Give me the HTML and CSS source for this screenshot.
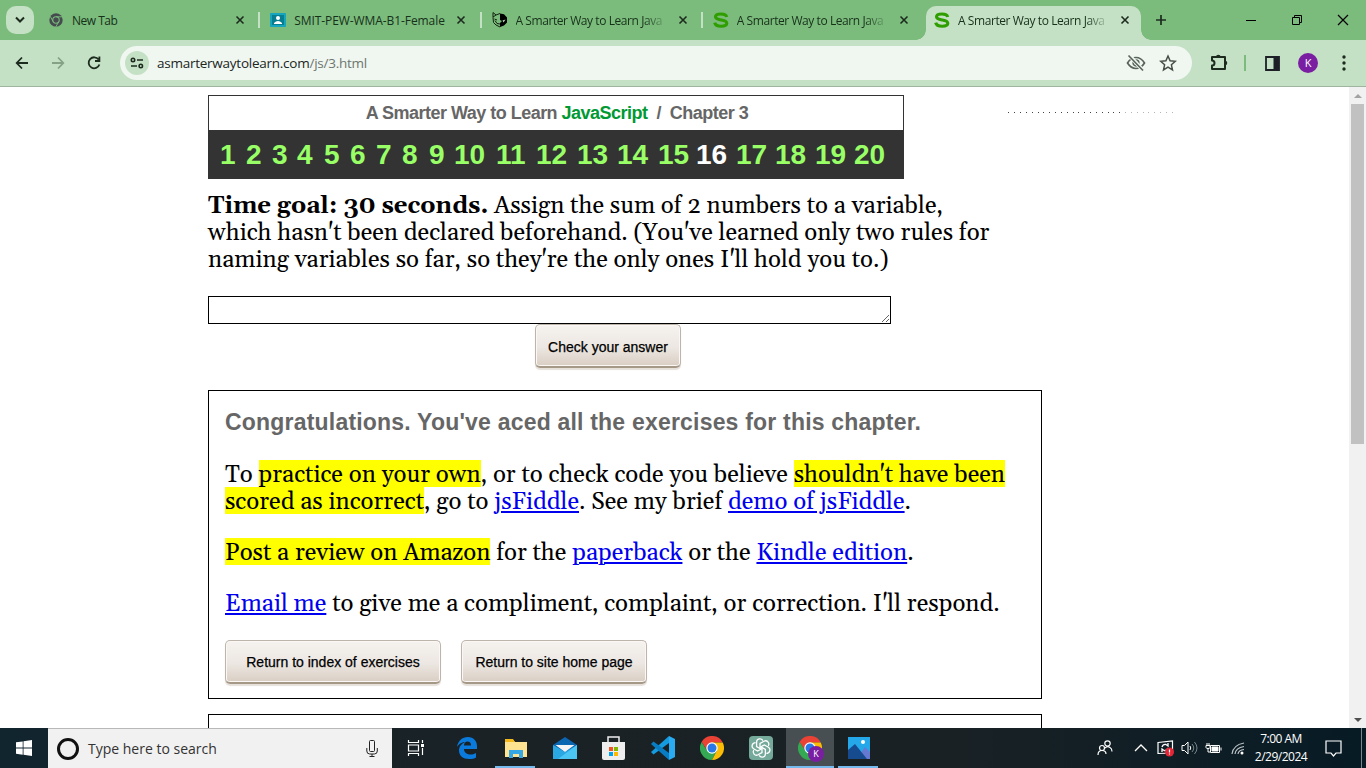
FILE: index.html
```
<!DOCTYPE html>
<html lang="en">
<head>
<meta charset="utf-8">
<title>A Smarter Way to Learn JavaScript</title>
<link rel="stylesheet" href="styles.css">
</head>
<body>
<svg class="defs" width="0" height="0">
  <symbol id="x" viewBox="0 0 10 10"><path d="M1.500 1.500l7 7M8.500 1.500l-7 7" stroke="#1d2b1f" stroke-width="1.600"/></symbol>
  <symbol id="s" viewBox="0 0 16 16"><path d="M13.700 5C13.200 2.700 10.800 2 8 2C4.500 2 2.500 3.100 2.500 4.800C2.500 7.200 5.500 7.400 8 7.900C11 8.500 13.800 8.900 13.800 11.300C13.800 13.300 11 14.200 8.200 14.200C4.800 14.200 2.200 13 1.700 10.600" fill="none" stroke="#2f9e00" stroke-width="3.100"/></symbol>
  <symbol id="chrome" viewBox="0 0 24 24"><path d="M12 6.500h10.700A12 12 0 0 0 1.600 6l5.600 8.500z" fill="#ea4335"/><path d="M7.200 14.700L1.600 6A12 12 0 0 0 12 24l4.900-9.300z" fill="#34a853"/><path d="M16.800 14.700L12 24A12 12 0 0 0 22.700 6.500H12z" fill="#fbbc05"/><circle cx="12" cy="12" r="5.700" fill="#fff"/><circle cx="12" cy="12" r="4.500" fill="#2878e8"/></symbol>
</svg>
<header class="tabs">
  <div class="tabsearch"><svg width="10" height="8" viewBox="0 0 10 8"><path d="M1 1.500l4 4 4-4" fill="none" stroke="#1d2b1f" stroke-width="2"/></svg></div>
  <div class="tab"><svg class="fav small" viewBox="0 0 24 24"><circle cx="12" cy="12" r="11.500" fill="#454b4f"/><circle cx="12" cy="12" r="5.500" fill="none" stroke="#7bbc7c" stroke-width="1.800"/><path d="M12 6.500h11M7.200 14.700L2 5.500M16.800 14.700L11.500 24" stroke="#7bbc7c" stroke-width="1.600"/></svg><span class="title t1">New Tab</span><svg class="close"><use href="#x"/></svg></div>
  <div class="tab"><svg class="fav" viewBox="0 0 16 16"><rect y="1" width="16" height="14" rx="1" fill="#16a5bd"/><rect x="2" y="3" width="12" height="10" fill="#087e91"/><circle cx="8" cy="6" r="2" fill="#fff"/><path d="M4 12V11q4-4 8 0v1z" fill="#fff"/></svg><span class="title t2">SMIT-PEW-WMA-B1-Female</span><svg class="close"><use href="#x"/></svg></div>
  <div class="tab"><svg class="fav" viewBox="0 0 16 16"><path d="M8 1.500l4 .7 3 3.300v5l-3 3-4 1.500V11l2-2-2-1z" fill="#000"/><path d="M8 1.500L4 3 1 .5v5l.5 5L4 13l4 2M1 5l3-2M3 8.500l2 3 3 .5M2.500 7L5 8" fill="none" stroke="#10210f"/><path d="M10.500 8.500l3-1-2 3z" fill="#b7dab7"/></svg><span class="title fade">A Smarter Way to Learn Java</span><svg class="close"><use href="#x"/></svg></div>
  <div class="tab last"><svg class="fav"><use href="#s"/></svg><span class="title fade">A Smarter Way to Learn Java</span><svg class="close"><use href="#x"/></svg></div>
  <div class="tab active"><svg class="fav"><use href="#s"/></svg><span class="title fade">A Smarter Way to Learn Java</span><svg class="close"><use href="#x"/></svg></div>
  <svg class="plus" width="12" height="12" viewBox="0 0 12 12"><path d="M6 1v10M1 6h10" stroke="#1d2b1f" stroke-width="1.700"/></svg>
  <div class="win">
    <svg width="12" height="12"><path d="M1 6.500h10" stroke="#000"/></svg>
    <svg width="12" height="12" fill="none" stroke="#000"><path d="M1.500 3.500h7v7h-7zM3.500 3.500v-2h7v7h-2"/></svg>
    <svg width="12" height="12"><path d="M1 1l10 10M11 1L1 11" stroke="#000" stroke-width="1.200"/></svg>
  </div>
</header>
<div class="toolbar">
  <div class="navs">
    <svg width="16" height="16" viewBox="0 0 16 16" fill="none" stroke="#1d2b1f" stroke-width="1.800"><path d="M14 8H3M8 2.500L2.700 8 8 13.500"/></svg>
    <svg width="16" height="16" viewBox="0 0 16 16" fill="none" stroke="#85a286" stroke-width="1.800"><path d="M2 8h11M8 2.500L13.300 8 8 13.500"/></svg>
    <svg width="16" height="16" viewBox="0 0 16 16" fill="none" stroke="#1d2b1f" stroke-width="1.800"><path d="M12.600 4.500A5.500 5.500 0 1 0 13.400 9.500M13.400 1.500V6H9"/></svg>
  </div>
  <div class="omni">
    <div class="site"><svg width="14" height="12" viewBox="0 0 14 12" fill="none" stroke="#1d2b1f" stroke-width="1.600"><circle cx="3" cy="3" r="1.700"/><path d="M7 3h6M1 9h6"/><circle cx="10.800" cy="9" r="1.700"/></svg></div>
    <span class="url">asmarterwaytolearn.com<i>/js/3.html</i></span>
    <svg width="20" height="18" viewBox="0 0 20 18" fill="none" stroke="#59635a" stroke-width="1.700"><path d="M1.500 9Q5 3.500 10 3.500T18.500 9Q15 14.500 10 14.500T1.500 9z"/><circle cx="10" cy="9" r="2.800"/><path d="M3 1l14 15.500" stroke="#f0f7f1" stroke-width="4"/><path d="M2.500 1.500l14.500 15"/></svg>
    <svg class="star" width="18" height="18" viewBox="0 0 18 18"><path d="M9 2l2.100 4.800 5.200.5-3.900 3.500 1.100 5.100L9 13.200l-4.500 2.700 1.100-5.100L1.700 7.300l5.200-.5z" fill="none" stroke="#454f46" stroke-width="1.500"/></svg>
  </div>
  <svg class="puzzle" width="20" height="20" viewBox="0 0 20 20"><path d="M3 4h13v12H3v-3.500q2.500 0 2.500-2.500T3 7.500z" fill="none" stroke="#1d2b1f" stroke-width="2" stroke-linejoin="round"/><path d="M7 4a2.300 2.300 0 0 1 4.600 0zM16 7.700a2.300 2.300 0 0 1 0 4.600z" fill="#1d2b1f"/></svg>
  <i class="bar"></i>
  <svg class="panel" width="15" height="15"><path d="M1 1h13v13H1z" fill="none" stroke="#1d2026" stroke-width="1.800"/><path d="M8.500 1H14v13H8.500z" fill="#1d2026"/></svg>
  <div class="avatar">K</div>
  <svg class="dots" width="4" height="16" fill="#1d2b1f"><circle cx="2" cy="2" r="1.700"/><circle cx="2" cy="8" r="1.700"/><circle cx="2" cy="14" r="1.700"/></svg>
</div>
<div class="view">
  <main class="page">
    <div class="top">
      <div class="head">
        <div class="name">A Smarter Way to Learn <b>JavaScript</b>&nbsp; /&nbsp; Chapter 3</div>
        <nav class="nums"><a>1</a><a>2</a><a>3</a><a>4</a><a>5</a><a>6</a><a>7</a><a>8</a><a>9</a><a>10</a><a>11</a><a>12</a><a>13</a><a>14</a><a>15</a><a class="on">16</a><a>17</a><a>18</a><a>19</a><a>20</a></nav>
      </div>
      <div class="dotline"></div>
    </div>
    <p class="serif question"><b>Time goal: 30 seconds.</b> Assign the sum of 2 numbers to a variable,<br>which hasn't been declared beforehand. (You've learned only two rules for<br>naming variables so far, so they're the only ones I'll hold you to.)</p>
    <textarea class="answer"></textarea>
    <button class="btn check">Check your answer</button>
    <section class="box">
      <h1>Congratulations. You've aced all the exercises for this chapter.</h1>
      <p class="serif">To <mark>practice on your own</mark>, or to check code you believe <mark>shouldn't have been</mark><br><mark>scored as incorrect</mark>, go to <a>jsFiddle</a>. See my brief <a>demo of jsFiddle</a>.</p>
      <p class="serif"><mark>Post a review on Amazon</mark> for the <a>paperback</a> or the <a>Kindle edition</a>.</p>
      <p class="serif"><a>Email me</a> to give me a compliment, complaint, or correction. I'll respond.</p>
      <div class="buttons"><button class="btn index">Return to index of exercises</button><button class="btn home">Return to site home page</button></div>
    </section>
    <section class="box next"></section>
  </main>
  <div class="scroll"><i class="up"></i><div class="thumb"></div><i class="down"></i></div>
</div>
<footer class="task">
  <div class="start"><svg width="16" height="16" fill="#fff"><path d="M0 2.300L6.700 1.400V7.500H0zM7.500 1.200L16 0v7.500H7.500zM0 8.500h6.700v6.200L0 13.700zM7.500 8.500H16V16l-8.500-1.200z"/></svg></div>
  <div class="search"><i class="ring"></i><span>Type here to search</span><svg width="12" height="18" viewBox="0 0 12 18" fill="none" stroke="#222"><rect x="3.500" y=".5" width="5" height="11" rx="1"/><path d="M.8 8v3q0 3 3 3h4.500q3 0 3-3V8M6 14v2.500M3.500 16.500h5"/></svg></div>
  <div class="apps">
    <div class="view-btn"><svg width="18" height="18" fill="none" stroke="#fff" stroke-width="1.200"><path d="M1.500 1v2.500h10V1M1.500 17v-2.500h10V17M1.500 6h10v6h-10zM15.500 1v3M15.500 9v7"/><path d="M14 5h3v3h-3z" fill="#fff" stroke="none"/></svg></div>
    <div><svg width="20" height="22" viewBox="0 0 20 22"><path d="M0 10C1 4 5 0 11 0c5.500 0 9 4 9 9v3H7c0 4 3.500 5.500 6.500 5.500 2.500 0 4.500-1 5.500-1.600v4.500C17.500 21.300 15 22 12 22 6 22 2 18.500 2 13.500c0-4 2.500-6.800 6-8.500C4.500 5 1.500 7.500 0 10zM7 8.500h7c0-2.500-1.200-4-3.500-4S7 6.200 7 8.500z" fill="#0a7bdc"/></svg></div>
    <div class="open"><svg width="22" height="19"><path d="M0 1h8l2 2h12v15H0z" fill="#ffe391"/><path d="M0 0h8l2 3H0z" fill="#f5b91b"/><path d="M4 11h14v8h-4v-4H8v4H4z" fill="#36a7e5"/></svg></div>
    <div><svg width="24" height="22"><path d="M0 8L12 0l12 8v14H0z" fill="#0b66b2"/><path d="M0 8l12 7L24 8v14H0z" fill="#29a8e4"/><path d="M24 8v14H5z" fill="#4bc5f3"/><path d="M2.500 8h19L12 15z" fill="#f4f4f4"/></svg></div>
    <div><svg width="23" height="24"><path d="M6 7V1h11v6" fill="none" stroke="#eee" stroke-width="1.500"/><path d="M0 6h23v16q0 2-2 2H2q-2 0-2-2z" fill="#eee"/><path d="M7 11h4v4H7z" fill="#f15322"/><path d="M12 11h4v4h-4z" fill="#80b900"/><path d="M7 16h4v4H7z" fill="#00a3ee"/><path d="M12 16h4v4h-4z" fill="#ffb900"/></svg></div>
    <div><svg width="24" height="24"><path d="M18 0v7L2.500 18.500 0 16z" fill="#159be0"/><path d="M18 24v-7L2.500 5.500 0 8z" fill="#087dc4"/><path d="M18 0l6 3v18l-6 3z" fill="#2aaaf0"/></svg></div>
    <div><svg width="24" height="24"><use href="#chrome"/></svg></div>
    <div><svg width="24" height="24" viewBox="0 0 24 24"><rect width="24" height="24" rx="4" fill="#75a99a"/><g fill="none" stroke="#fff" stroke-width="1.300"><path id="pet" d="M11 12.800V7.500l4-2.300c3-1.600 6 1.800 4.300 4.800"/><use href="#pet" transform="rotate(60 12 12)"/><use href="#pet" transform="rotate(120 12 12)"/><use href="#pet" transform="rotate(180 12 12)"/><use href="#pet" transform="rotate(240 12 12)"/><use href="#pet" transform="rotate(300 12 12)"/></g></svg></div>
    <div class="open current"><svg width="24" height="24"><use href="#chrome"/></svg><b class="badge">K</b></div>
    <div class="open"><svg width="22" height="22"><path d="M0 0h22v22H0z" fill="#24a8ea"/><path d="M12 17l5-7 5 5v7H10z" fill="#6579d2"/><path d="M0 13l7-6 12 15H0z" fill="#174b8f"/><circle cx="15" cy="5" r="2" fill="#fff"/></svg></div>
  </div>
  <div class="tray">
    <svg class="people" width="16" height="16" fill="none" stroke="#fff" stroke-width="1.200"><circle cx="10.500" cy="3.500" r="2.700"/><circle cx="5" cy="8" r="2.500"/><path d="M1 15q0-4.500 4-4.500T9 14M8 8q2.500-2.500 5-.5 2 1 2 4"/></svg>
    <svg class="chev" width="14" height="8" fill="none" stroke="#fff" stroke-width="1.300"><path d="M1 7l6-6 6 6"/></svg>
    <svg class="upd" width="18" height="17"><path d="M1 2.500L15.500 1v12L1 13.500z" fill="none" stroke="#fff" stroke-width="1.200"/><path d="M5 7q1-3 4-2.500L11 6V3M11 8q-1 3-4 2.500L5 9v3" fill="none" stroke="#fff" stroke-width="1.300"/><circle cx="12.500" cy="12" r="4.500" fill="#e32636"/><path d="M12.500 9.500v3M12.500 13.500v1" stroke="#fff" stroke-width="1.200"/></svg>
    <svg class="snd" width="18" height="14" fill="none" stroke="#fff"><path d="M1 4.500h2.500L7 1v12L3.500 9.500H1zM9 5q1.500 2 0 4"/><path d="M11 3q3.500 4 0 8M13.500 1q5 6 0 12" stroke="#77858b"/></svg>
    <svg class="bat" width="17" height="13" fill="none" stroke="#fff"><path d="M5.500 3.500h9v7h-9zM16 5.500v3M1 3.500h4v2q0 1-2 1t-2-1zM2 1v2M4 1v2M3 6v4h2"/><path d="M7 5h6v4H7z" fill="#fff"/></svg>
    <svg class="wifi" width="14" height="13" fill="none" stroke="#bcc4c7" stroke-width="1.200"><path d="M1 12Q2 3 13 1M4 12Q4.500 6 13 4.500M7 12q.5-4 6-4.500"/><circle cx="11" cy="11" r="1.500" fill="#fff" stroke="none"/></svg>
    <div class="clock"><span class="time">7:00 AM</span><span class="date">2/29/2024</span></div>
    <svg class="note" width="17" height="17" fill="none" stroke="#fff" stroke-width="1.200"><path d="M1 1h15v12h-5l-2.500 3L6 13H1z"/></svg>
    <i class="edge"></i>
  </div>
</footer>
</body>
</html>
```
FILE: styles.css
```
* { box-sizing: border-box; }
body { margin: 0; width: 1366px; height: 768px; overflow: hidden; display: flex; flex-direction: column; background: #fff; font-family: "Open Sans", sans-serif; color: #000; }
svg { display: block; flex: none; }
.defs { position: absolute; }
.tabs { flex: none; height: 40px; background: #7bbc7c; display: flex; align-items: center; padding-left: 6px; }
.tabsearch { width: 28px; height: 28px; border-radius: 10px; background: #c5e1c5; display: flex; align-items: center; justify-content: center; margin-right: 4px; }
.tab { flex: none; width: 221.25px; height: 40px; display: flex; align-items: center; padding-left: 11px; position: relative; color: #17301a; }
.tab:not(.last):not(.active)::after { content: ""; position: absolute; right: -1px; top: 12px; width: 2px; height: 16px; background: #c5e1c5; }
.fav { width: 16px; height: 16px; margin-right: 8px; }
.fav.small { width: 14px; height: 14px; margin-right: 9px; }
.title { width: 152px; font-size: 12px; white-space: nowrap; margin-right: 10px; letter-spacing: -.43px; }
.title.t1 { letter-spacing: -.5px; width: 153px; }
.title.t2 { letter-spacing: -.08px; }
.fade { -webkit-mask-image: linear-gradient(90deg, #000 84%, transparent); mask-image: linear-gradient(90deg, #000 84%, transparent); }
.close { width: 10px; height: 10px; }
.active { background: #c5e1c5; height: 34px; align-self: flex-end; width: 215px; margin-left: 3px; padding: 0 0 6px 8px; border-radius: 10px 10px 0 0; }
.active::before, .active::after { content: ""; position: absolute; bottom: 0; width: 10px; height: 10px; }
.active::before { left: -10px; background: radial-gradient(circle at 0 0, transparent 9.5px, #c5e1c5 10px); }
.active::after { right: -10px; background: radial-gradient(circle at 100% 0, transparent 9.5px, #c5e1c5 10px); }
.plus { margin-left: 14px; }
.win { margin-left: auto; display: flex; gap: 34px; padding-right: 17px; }
.toolbar { flex: none; height: 47px; background: #c5e1c5; border-bottom: 1px solid #9fb59f; display: flex; align-items: center; padding: 0 20px 0 14px; }
.navs { display: flex; gap: 20px; width: 106px; }
.omni { width: 1072px; height: 34px; border-radius: 17px; background: #f0f7f1; display: flex; align-items: center; padding-left: 5px; }
.site { width: 24px; height: 24px; border-radius: 50%; background: #c5e1c5; display: flex; align-items: center; justify-content: center; }
.url { margin-left: 8px; width: 969px; font-size: 13.5px; letter-spacing: -.25px; color: #202521; }
.url i { font-style: normal; color: #6d756e; }
.star { margin-left: 13px; }
.puzzle { margin-left: 17px; }
.bar { width: 2px; height: 16px; background: #7bbc7c; margin-left: 15px; }
.panel { margin-left: 19px; }
.avatar { margin-left: 18px; width: 20px; height: 20px; border-radius: 50%; background: #7b1fa2; color: #fff; font-size: 11px; line-height: 20px; text-align: center; }
.dots { margin-left: 24px; }
.view { flex: 1; min-height: 0; overflow: hidden; display: flex; }
.page { width: 1349px; padding: 8px 0 0 208px; }
.top { display: flex; gap: 104px; }
.head { width: 696px; height: 84px; background: #333; padding: 1px; }
.name { height: 34px; background: #fff; text-align: center; font: bold 18px/35px "Liberation Sans", sans-serif; letter-spacing: -.52px; color: #666; padding-left: 2px; white-space: nowrap; }
.name b { color: #093; }
.nums { display: grid; grid-template-columns: 26px 26px 25px 27px 26px 26px 26px 27px 25px 42px 40px 41px 40px 41px 38px 40px 39px 40px 39px 34px; padding-left: 11px; font: bold 28px/49px "Liberation Sans", sans-serif; color: #9f6; }
.nums .on { color: #fff; }
.dotline { width: 166px; height: 1px; margin-top: 17px; background: repeating-linear-gradient(90deg, #444 0 1px, transparent 1px 6px, #444 6px 7px, transparent 7px 12px, #444 12px 13px, transparent 13px 18px, #444 18px 19px, transparent 19px 24px, #444 24px 25px, transparent 25px 30px, #444 30px 31px, transparent 31px 35px); -webkit-mask-image: linear-gradient(90deg, #000 68%, #0006 70%); mask-image: linear-gradient(90deg, #000 68%, #0006 70%); }
.serif { font: 24px/27px Gelasio, Georgia, "Liberation Serif", serif; white-space: nowrap; }
.question { margin: 14px 0 22px; height: 81px; }
.answer { display: block; width: 683px; height: 28px; border: 1px solid #000; background: #fff; outline: 0; padding: 2px; overflow: hidden; }
.btn { display: block; border: 1px solid #bdb5ab; border-bottom: 2px solid #a59887; border-radius: 5px; background: linear-gradient(#f6f2ef, #ece7e2 55%, #d9cec3); box-shadow: inset 0 0 0 1px #faf7f4, 0 2px 1px #e6e0da; height: 44px; padding: 0; font: 14px "Liberation Sans", sans-serif; color: #000; text-align: center; white-space: nowrap; -webkit-text-stroke: .25px #000; }
.check { width: 146px; margin: 0 0 22px 327px; padding-top: 2px; }
.box { width: 834px; height: 309px; border: 1px solid #000; padding: 0 16px; }
.next { margin-top: 15px; }
.box h1 { margin: 17px 0 26px; font: bold 23px/28px "Liberation Sans", sans-serif; color: #666; letter-spacing: .2px; white-space: nowrap; }
.box p { margin: 0 0 24px; }
.box a { color: #00e; text-decoration: underline; text-decoration-thickness: 2px; text-underline-offset: 2px; }
mark { display: inline-block; height: 27px; background: linear-gradient(#ff0, #ff0) 0 0 / 100% 25px no-repeat; box-shadow: 0 -2px #ff0; vertical-align: top; }
.buttons { display: flex; gap: 20px; margin-top: -2px; }
.index { width: 216px; }
.home { width: 186px; }
.scroll { width: 17px; background: #f1f1f1; display: flex; flex-direction: column; align-items: center; }
.thumb { width: 13px; height: 340px; background: #c1c1c1; }
.up, .down { width: 17px; height: 17px; display: flex; align-items: center; justify-content: center; }
.up::before { content: ""; border: 4px solid transparent; border-top: 0; border-bottom-color: #a3a3a3; }
.down { margin-top: auto; }
.down::before { content: ""; border: 4px solid transparent; border-bottom: 0; border-top-color: #505050; }
.task { flex: none; height: 40px; background: linear-gradient(90deg, #11252f, #1a2226 35%, #192125 70%, #071b25); display: flex; color: #fff; }
.start { width: 48px; display: flex; align-items: center; justify-content: center; }
.search { width: 344px; background: #f1f1f1; border-top: 1px solid #b8b8b8; display: flex; align-items: center; padding-left: 9px; color: #333; font-size: 14px; }
.ring { width: 22px; height: 22px; border: 3px solid #111; border-radius: 50%; margin-right: 9px; }
.search span { width: 278px; }
.apps { display: flex; padding-left: 1px; }
.apps > div { width: 49px; height: 40px; display: flex; align-items: center; justify-content: center; position: relative; }
.apps > .view-btn { padding-right: 3px; }
.apps .open::after { content: ""; position: absolute; bottom: 0; left: 4px; width: 40px; height: 2px; background: #76b9ed; }
.apps .current { background: linear-gradient(#474f52, #474f52) 1px 0 / 48px 40px no-repeat; }
.apps .current::after { left: 1px; width: 48px; }
.badge { position: absolute; left: 23px; top: 18px; width: 16px; height: 16px; border-radius: 50%; background: #7b1fa2; font-size: 9px; line-height: 16px; text-align: center; font-weight: 400; }
.tray { margin-left: auto; width: 270px; display: flex; align-items: center; }
.people { margin-left: 1px; }
.chev { margin-left: 21px; }
.upd { margin-left: 9px; }
.snd { margin-left: 6px; }
.bat { margin-left: 6px; }
.wifi { margin-left: 9px; }
.clock { width: 60px; margin-left: 6px; display: flex; flex-direction: column; align-items: center; font-size: 12px; line-height: 18px; letter-spacing: -.5px; white-space: nowrap; }
.note { margin-left: 14px; }
.edge { width: 1px; height: 40px; background: #78868c; margin-left: 19px; }
```
